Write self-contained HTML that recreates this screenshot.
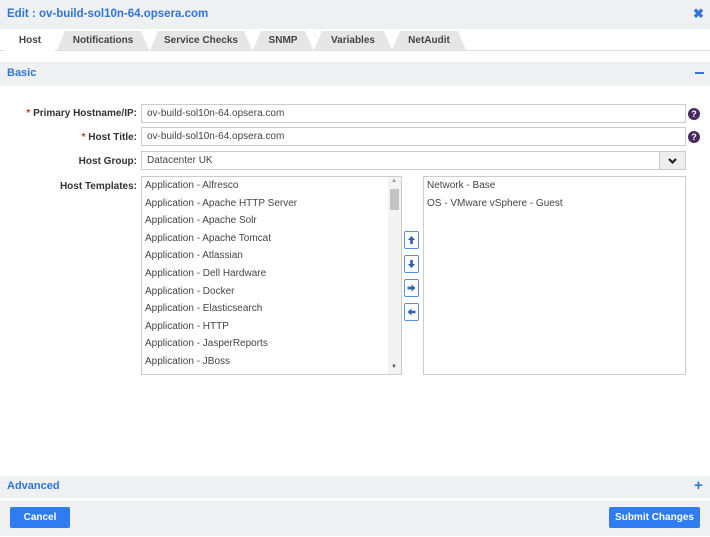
<!DOCTYPE html>
<html><head><style>
*{margin:0;padding:0;box-sizing:border-box}
body{width:710px;height:537px;background:#fff;font-family:"Liberation Sans",sans-serif;font-size:10px;color:#444;position:relative;overflow:hidden}
.a{position:absolute}
.bar{position:absolute;left:0;width:710px;background:#eff0f2}
.blue{color:#2f74d8;font-weight:bold}
.tab{position:absolute;top:31px;height:19px;background:#e6e6e6;font-weight:bold;color:#444;font-size:10px;text-align:center;line-height:20px;clip-path:polygon(0 100%,8px 0,calc(100% - 8px) 0,100% 100%)}
.lbl{position:absolute;right:573px;font-weight:bold;color:#333;white-space:nowrap}
.lbl i{color:#e03030;font-style:normal}
.inp{position:absolute;left:141px;width:545px;height:19px;border:1px solid #ccc;padding-left:5px;line-height:18px;color:#444}
.help{position:absolute;left:688px;width:12px;height:12px;border-radius:50%;background:#4a2a5e;color:#fff;font-size:9px;font-weight:bold;text-align:center;line-height:12px}
.list{position:absolute;top:176px;height:199px;border:1px solid #ccc;overflow:hidden}
.list div{height:17.6px;line-height:17px;padding-left:3px;white-space:nowrap}
.ab{position:absolute;left:404px;width:15px;height:18px;border:1px solid #5b8fd8;border-radius:2px}
.ab svg{position:absolute;left:2px;top:3px}
.btn{position:absolute;top:507px;height:21px;background:#2f7cf0;color:#fff;font-weight:bold;border-radius:2px;text-align:center;line-height:21px}
</style></head><body>
<div class="bar" style="top:0;height:29px"></div>
<div class="a blue" style="left:7px;top:8px;font-size:11.5px">Edit : ov-build-sol10n-64.opsera.com</div>
<div class="a" style="left:693px;top:6px;color:#2f74d8;font-weight:bold;font-size:13px">✖</div>
<div class="a" style="left:0;top:50px;width:710px;height:1px;background:#ddd"></div>
<div class="tab" style="left:5px;width:50px;background:#fff;height:20px">Host</div>
<div class="tab" style="left:57px;width:92px">Notifications</div>
<div class="tab" style="left:150px;width:102px">Service Checks</div>
<div class="tab" style="left:253px;width:60px">SNMP</div>
<div class="tab" style="left:314px;width:78px">Variables</div>
<div class="tab" style="left:392px;width:74px">NetAudit</div>
<div class="bar" style="top:62px;height:24px"></div>
<div class="a blue" style="left:7px;top:67px;font-size:11px">Basic</div>
<div class="a" style="left:695px;top:72px;width:9px;height:2px;background:#2f74d8"></div>

<div class="lbl" style="top:108px"><i>* </i>Primary Hostname/IP:</div>
<div class="inp" style="top:104px">ov-build-sol10n-64.opsera.com</div>
<div class="help" style="top:108px">?</div>
<div class="lbl" style="top:132px"><i>* </i>Host Title:</div>
<div class="inp" style="top:127px">ov-build-sol10n-64.opsera.com</div>
<div class="help" style="top:131px">?</div>
<div class="lbl" style="top:156px">Host Group:</div>
<div class="inp" style="top:151px">Datacenter UK</div>
<div class="a" style="left:659px;top:151px;width:27px;height:19px;background:#eee;border:1px solid #ccc">
<svg width="25" height="17" viewBox="0 0 25 17"><path d="M9 7 L12.5 10.5 L16 7" stroke="#222" stroke-width="2.2" fill="none"/></svg></div>
<div class="lbl" style="top:181px">Host Templates:</div>
<div class="list" style="left:141px;width:261px">
<div>Application - Alfresco</div><div>Application - Apache HTTP Server</div><div>Application - Apache Solr</div><div>Application - Apache Tomcat</div><div>Application - Atlassian</div><div>Application - Dell Hardware</div><div>Application - Docker</div><div>Application - Elasticsearch</div><div>Application - HTTP</div><div>Application - JasperReports</div><div>Application - JBoss</div><div>Application - Jira</div>
</div>
<div class="a" style="left:388px;top:177px;width:13px;height:197px;background:#f3f3f3"></div>
<div class="a" style="left:390px;top:189px;width:9px;height:21px;background:#c4c4c4"></div>
<div class="a" style="left:391px;top:178px;font-size:6px;color:#999">▲</div>
<div class="a" style="left:391px;top:364px;font-size:6px;color:#555">▼</div>
<div class="ab" style="top:231px"><svg width="9" height="10" viewBox="0 0 9 10"><path d="M4.5 1 L8 5 H5.8 V9 H3.2 V5 H1 Z" fill="#2b5fb0"/></svg></div>
<div class="ab" style="top:255px"><svg width="9" height="10" viewBox="0 0 9 10"><path d="M4.5 9 L8 5 H5.8 V1 H3.2 V5 H1 Z" fill="#2b5fb0"/></svg></div>
<div class="ab" style="top:279px"><svg width="9" height="10" viewBox="0 0 9 10"><path d="M8.5 5 L4.5 1.5 V3.7 H0.5 V6.3 H4.5 V8.5 Z" fill="#2b5fb0"/></svg></div>
<div class="ab" style="top:303px"><svg width="9" height="10" viewBox="0 0 9 10"><path d="M0.5 5 L4.5 1.5 V3.7 H8.5 V6.3 H4.5 V8.5 Z" fill="#2b5fb0"/></svg></div>
<div class="list" style="left:423px;width:263px">
<div>Network - Base</div><div>OS - VMware vSphere - Guest</div>
</div>

<div class="bar" style="top:476px;height:22px"></div>
<div class="a blue" style="left:7px;top:480px;font-size:11px">Advanced</div>
<div class="a" style="left:694px;top:477px;color:#2f74d8;font-weight:bold;font-size:15px">+</div>
<div class="bar" style="top:501px;height:35px"></div>
<div class="btn" style="left:10px;width:60px">Cancel</div>
<div class="btn" style="left:609px;width:91px">Submit Changes</div>
</body></html>
